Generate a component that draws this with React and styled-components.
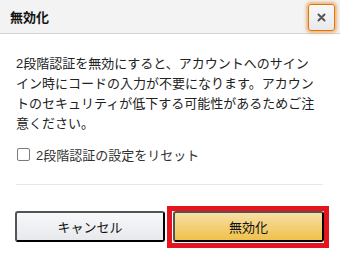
import styled, { createGlobalStyle } from 'styled-components';

const Global = createGlobalStyle`
  body {
    margin: 0;
    background: #fff;
    font-family: "Liberation Sans", "Noto Sans CJK JP", sans-serif;
    color: #111;
  }
`;

const Dialog = styled.div`
  width: 340px;
  height: 270px;
  background: #fff;
  display: flex;
  flex-direction: column;
`;

const Header = styled.div`
  height: 34px;
  box-sizing: border-box;
  background: #f3f3f3;
  border-bottom: 1px solid #d4d4d4;
  display: flex;
  align-items: center;
  justify-content: space-between;
  padding: 0 5px 0 10px;
`;

const Title = styled.h4`
  margin: 0;
  font-size: 13px;
  font-weight: 700;
  color: #111;
`;

const CloseButton = styled.button`
  width: 27px;
  height: 27px;
  box-sizing: border-box;
  margin-top: 1px;
  padding: 0;
  border: 1px solid #e77600;
  border-radius: 3px;
  background: linear-gradient(#f7f8fa, #e7e9ec);
  box-shadow: 0 0 3px 2px rgba(228, 121, 17, 0.5);
  display: flex;
  align-items: center;
  justify-content: center;
  color: #555;
`;

const Body = styled.div`
  padding: 20px 17px 0 16px;
`;

const Message = styled.p`
  margin: 0;
  font-size: 13px;
  line-height: 20px;
  color: #222;
  text-spacing-trim: space-all;
`;

const CheckRow = styled.label`
  display: flex;
  align-items: center;
  gap: 6px;
  margin-top: 11px;
  padding-left: 1px;
  font-size: 13px;
  color: #333;
`;

const Box = styled.span`
  width: 13px;
  height: 13px;
  box-sizing: border-box;
  border: 1px solid #7a7a7a;
  border-radius: 2px;
  background: #fff;
`;

const Divider = styled.hr`
  margin: 20px 0 0;
  border: 0;
  border-top: 1px solid #e7e7e7;
`;

const Footer = styled.div`
  display: grid;
  grid-template-columns: 150px 151px;
  gap: 8px;
  padding: 26px 0 0 15px;
`;

const Button = styled.button`
  position: relative;
  height: 31px;
  box-sizing: border-box;
  border-radius: 3px;
  font-family: inherit;
  font-size: 13px;
  color: #111;
  border: 1px solid ${(p) => (p.$primary ? '#a88734 #9c7e31 #846a29' : '#adb1b8 #a2a6ac #8d9096')};
  background: ${(p) =>
    p.$primary ? 'linear-gradient(#f7dfa5, #f0c14b)' : 'linear-gradient(#f7f8fa, #e7e9ec)'};
`;

const Highlight = styled.span`
  position: absolute;
  left: -8px;
  top: -7px;
  right: -7px;
  bottom: -8px;
  border: 5px solid #e5141f;
  pointer-events: none;
`;

export default function App() {
  return (
    <>
      <Global />
      <Dialog>
        <Header>
          <Title>無効化</Title>
          <CloseButton aria-label="閉じる">
            <svg width="9" height="9" viewBox="0 0 9 9">
              <path d="M1.5 1.5L7.5 7.5M7.5 1.5L1.5 7.5" stroke="#555" strokeWidth="2" strokeLinecap="round" />
            </svg>
          </CloseButton>
        </Header>
        <Body>
          <Message>
            2段階認証を無効にすると、アカウントへのサイン
            <br />
            イン時にコードの入力が不要になります。アカウン
            <br />
            トのセキュリティが低下する可能性があるためご注
            <br />
            意ください。
          </Message>
          <CheckRow>
            <Box />
            2段階認証の設定をリセット
          </CheckRow>
          <Divider />
        </Body>
        <Footer>
          <Button>キャンセル</Button>
          <Button $primary>
            無効化
            <Highlight />
          </Button>
        </Footer>
      </Dialog>
    </>
  );
}
